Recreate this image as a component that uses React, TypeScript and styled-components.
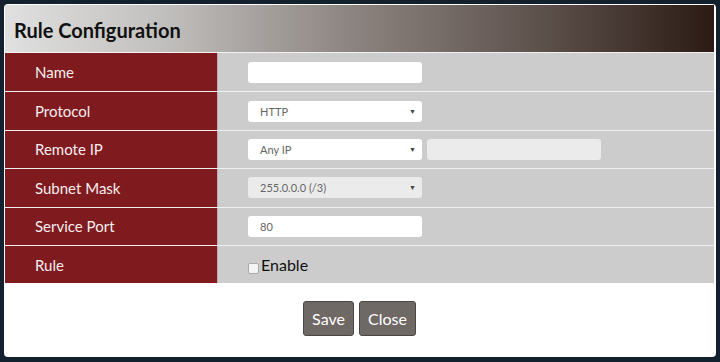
import React from "react"
import styled, { createGlobalStyle } from "styled-components"

const GlobalStyle = createGlobalStyle`
  html, body {
    margin: 0;
    padding: 0;
    background: #13202d;
    font-family: Lato, "Open Sans", sans-serif;
  }
`
const Page = styled.div`
  width: 720px;
  height: 362px;
  padding: 4px 4px 5px;
  box-sizing: border-box;
`
const Dialog = styled.div`
  height: 100%;
  background: #fff;
  border-radius: 4px;
  overflow: hidden;
  display: flex;
  flex-direction: column;
  padding: 1px 2px 0 1px;
  box-sizing: border-box;
`
const Header = styled.div`
  height: 47px;
  display: flex;
  align-items: center;
  padding-left: 9px;
  background: linear-gradient(to right, #e0e0e0 0%, #c2c0be 22%, #8e8682 48%, #5e524d 75%, #2c1b15 100%);
  border-bottom: 1px solid #f2f2f2;
`
const Title = styled.h4`
  margin: 2px 0 0;
  font-size: 20px;
  font-weight: 700;
  color: #111;
`
const Table = styled.div`
  display: flex;
  flex-direction: column;
`
const Row = styled.div`
  display: grid;
  grid-template-columns: 213px 1fr;
  height: 38.4px;
  border-top: 1px solid #f0f0f0;
  box-sizing: border-box;
  &:first-child {
    border-top: none;
  }
`
const Label = styled.div`
  background: #7f1a1f;
  color: #f6eeee;
  font-size: 15px;
  display: flex;
  align-items: center;
  padding-left: 30px;
  border-right: 1px solid #c9a9a9;
`
const Cell = styled.div`
  background: #cccccc;
  display: flex;
  align-items: center;
  padding-left: 30px;
  gap: 5px;
`
const TextInput = styled.div<{ $muted?: boolean }>`
  width: 174px;
  height: 21px;
  border-radius: 3px;
  background: ${(p) => (p.$muted ? "#ebebeb" : "#ffffff")};
  box-sizing: border-box;
  padding-left: 12px;
  font-size: 11px;
  color: #666;
  display: flex;
  align-items: center;
  position: relative;
`
const Arrow = styled.span`
  position: absolute;
  right: 6px;
  top: 6px;
  font-size: 7px;
  color: #444;
`
const Check = styled.span`
  width: 9px;
  height: 9px;
  border: 1px solid #aaa;
  border-radius: 2px;
  background: #f4f4f4;
  margin-top: 8px;
`
const CheckLabel = styled.span`
  font-size: 16px;
  color: #111;
  margin-left: -3px;
`
const Footer = styled.div`
  flex: 1;
  display: flex;
  justify-content: center;
  align-items: flex-start;
  padding-top: 18px;
  gap: 5px;
`
const Button = styled.button`
  height: 35px;
  padding: 0 8px;
  background: #6f6966;
  border: 1px solid #4a4644;
  border-radius: 3px;
  color: #fff;
  font-family: Lato, "Open Sans", sans-serif;
  font-size: 16px;
`

const App: React.FC = () => {
  return (
    <Page>
      <GlobalStyle />
      <Dialog>
        <Header>
          <Title>Rule Configuration</Title>
        </Header>
        <Table>
          <Row>
            <Label>Name</Label>
            <Cell>
              <TextInput />
            </Cell>
          </Row>
          <Row>
            <Label>Protocol</Label>
            <Cell>
              <TextInput>
                HTTP<Arrow>▼</Arrow>
              </TextInput>
            </Cell>
          </Row>
          <Row>
            <Label>Remote IP</Label>
            <Cell>
              <TextInput>
                Any IP<Arrow>▼</Arrow>
              </TextInput>
              <TextInput $muted />
            </Cell>
          </Row>
          <Row>
            <Label>Subnet Mask</Label>
            <Cell>
              <TextInput $muted>
                255.0.0.0 (/3)<Arrow>▼</Arrow>
              </TextInput>
            </Cell>
          </Row>
          <Row>
            <Label>Service Port</Label>
            <Cell>
              <TextInput>80</TextInput>
            </Cell>
          </Row>
          <Row>
            <Label>Rule</Label>
            <Cell>
              <Check />
              <CheckLabel>Enable</CheckLabel>
            </Cell>
          </Row>
        </Table>
        <Footer>
          <Button>Save</Button>
          <Button>Close</Button>
        </Footer>
      </Dialog>
    </Page>
  )
}

export default App
